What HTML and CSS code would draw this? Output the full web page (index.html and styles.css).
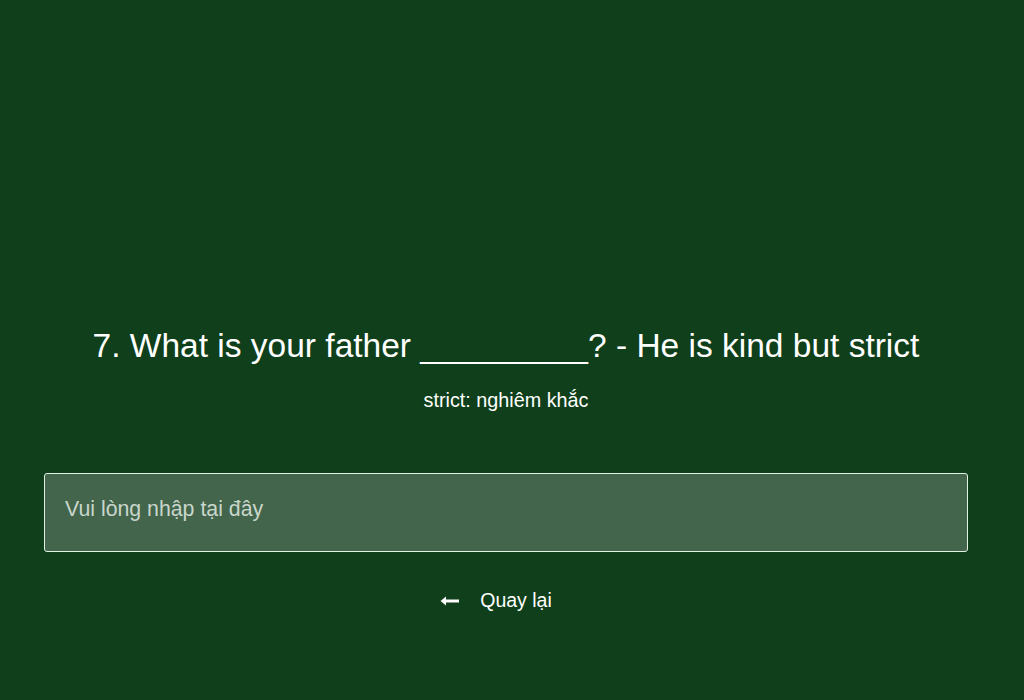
FILE: index.html
```html
<!DOCTYPE html>
<html lang="vi">
<head>
<meta charset="utf-8">
<link rel="stylesheet" href="styles.css">
</head>
<body>
<main class="page">
  <h1 class="question">7. What is your father _________? - He is kind but strict</h1>
  <p class="hint">strict: nghiêm khắc</p>
  <input class="answer" type="text" placeholder="Vui lòng nhập tại đây">
  <button class="back" type="button">
    <svg class="arrow" width="20" height="12" viewBox="0 0 20 12" aria-hidden="true">
      <path d="M19 6H4" stroke="#ffffff" stroke-width="3" fill="none"/>
      <path d="M0.5 6L6 1.5V10.5Z" fill="#ffffff"/>
    </svg>
    <span>Quay lại</span>
  </button>
</main>
</body>
</html>
```
FILE: styles.css
```css
html, body {
  margin: 0;
  padding: 0;
  background: #103f1b;
  height: 100%;
}
body {
  font-family: "Liberation Sans", Arial, sans-serif;
  color: #ffffff;
}
.page {
  display: flex;
  flex-direction: column;
  align-items: center;
  padding: 326px 56px 0 44px;
}
.question {
  margin: 0;
  font-size: 33.5px;
  font-weight: 400;
  line-height: 40px;
  text-align: center;
  white-space: nowrap;
}
.hint {
  margin: 23px 0 0;
  font-size: 19.8px;
  line-height: 22px;
}
.answer {
  box-sizing: border-box;
  width: 100%;
  height: 79px;
  margin-top: 62px;
  padding: 0 20px 6px;
  border: 1px solid #e2f1e5;
  border-radius: 3px;
  background: #43654b;
  color: #ffffff;
  font-family: "Liberation Sans", Arial, sans-serif;
  font-size: 21.3px;
  outline: none;
}
.answer::placeholder {
  color: #c9d6cb;
  opacity: 1;
}
.back {
  margin-top: 37px;
  display: flex;
  align-items: center;
  gap: 20px;
  background: none;
  border: none;
  color: #ffffff;
  font-family: "Liberation Sans", Arial, sans-serif;
  font-size: 19.5px;
  padding: 0 20px 0 0;
  cursor: pointer;
}
.arrow {
  display: block;
}
```
